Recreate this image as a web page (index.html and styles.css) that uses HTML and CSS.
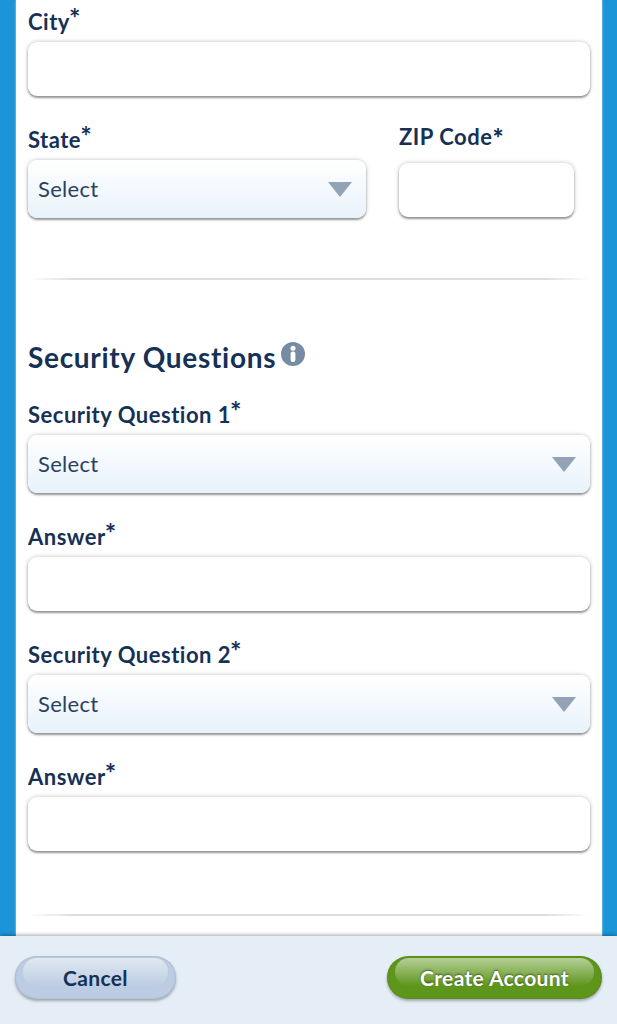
FILE: index.html
```html
<!doctype html>
<html lang="en">
<head>
    <meta charset="UTF-8">
    <title>Create Account</title>
    <meta name="viewport" content="width=device-width, initial-scale=1.0"/>
    <link rel="stylesheet" href="styles.css">
</head>
<body>
    <form class="page">
        <div class="panel">
            <div class="field">
                <label for="city">City<sup>*</sup></label>
                <input type="text" id="city">
            </div>
            <div class="row">
                <div class="field state">
                    <label>State<sup>*</sup></label>
                    <div class="select"><span>Select</span><i class="arrow"></i></div>
                </div>
                <div class="field zip">
                    <label for="zip">ZIP Code<b class="star">*</b></label>
                    <input type="text" id="zip">
                </div>
            </div>

            <hr>

            <h2>Security Questions
                <svg class="info" width="24" height="24" viewBox="0 0 24 24">
                    <circle cx="12" cy="12" r="12" fill="#768ba4"/>
                    <circle cx="12" cy="6.2" r="2.5" fill="#fff"/>
                    <rect x="9.6" y="9.6" width="4.8" height="10.4" rx="2" fill="#fff"/>
                </svg>
            </h2>
            <div class="field question">
                <label>Security Question 1<sup>*</sup></label>
                <div class="select"><span>Select</span><i class="arrow"></i></div>
            </div>
            <div class="field answer">
                <label for="answer1">Answer<sup>*</sup></label>
                <input type="text" id="answer1">
            </div>
            <div class="field question">
                <label>Security Question 2<sup>*</sup></label>
                <div class="select"><span>Select</span><i class="arrow"></i></div>
            </div>
            <div class="field answer">
                <label for="answer2">Answer<sup>*</sup></label>
                <input type="text" id="answer2">
            </div>

            <hr>
        </div>
        <div class="footer">
            <button type="button" class="btn cancel"><span>Cancel</span></button>
            <button type="button" class="btn create"><span>Create Account</span></button>
        </div>
    </form>
</body>
</html>
```

FILE: styles.css
```css
* { margin: 0; padding: 0; box-sizing: border-box; }
body { background: #1c95d8; color: #163156; font-family: Lato, "Liberation Sans", sans-serif; font-size: 22px; overflow: hidden; }
.page { height: 1024px; display: flex; flex-direction: column; }
.panel { width: 586px; height: 936px; margin-left: 16px; padding: 6px 12px 0; background: #fff; box-shadow: 0 0 2px rgba(255,255,255,0.7); overflow: hidden; }

.field label { display: block; height: 36px; line-height: 32px; font-weight: bold; letter-spacing: 0.5px; white-space: nowrap; }
sup { font-size: 27px; line-height: 0; vertical-align: 2px; letter-spacing: 0; margin-left: -1px; }
.star { font-size: 26px; line-height: 0; vertical-align: -3px; letter-spacing: 0; }
input, .select { display: block; width: 562px; border: 0; border-radius: 9px; background: #fff; box-shadow: 0 2px 2px rgba(0,0,0,0.34), 0 0 4px rgba(0,0,0,0.25); }
input { height: 54px; padding: 0 10px; font: inherit; color: inherit; }
.select { height: 58px; padding: 0 14px 0 10px; background: linear-gradient(#fff, #e8f2fb); color: #2b4164; display: flex; align-items: center; justify-content: space-between; letter-spacing: 0.3px; }
.select span { padding-bottom: 2px; }
.arrow { border: 12px solid transparent; border-top: 15px solid #92a2b7; border-bottom: 0; }

.row { display: flex; gap: 33px; margin-top: 27px; }
.state .select { width: 338px; }
.state label { height: 37px; line-height: 33px; }
.zip { margin-top: -2px; }
.zip label { height: 42px; }
.zip input { width: 175px; }

hr { height: 2px; border: 0; margin-top: 60px; background: linear-gradient(to right, transparent, #dedede 8%, #dedede 92%, transparent); }
h2 { display: flex; gap: 5px; margin-top: 60px; height: 36px; line-height: 34px; font-size: 28px; letter-spacing: 0.7px; white-space: nowrap; }
.info { margin-top: 2px; }

.question { margin-top: 28px; }
.answer { margin-top: 28px; }
h2 + .question { margin-top: 23px; }
.answer + hr { margin-top: 63px; }

.footer { height: 88px; padding: 20px 15px 0; background: #e5edf7; box-shadow: 0 -1px 4px rgba(0,0,0,0.35); position: relative; display: flex; justify-content: space-between; align-items: flex-start; }
.btn { position: relative; height: 43px; border: 0; border-radius: 22px; font: bold 21px Lato, "Liberation Sans", sans-serif; letter-spacing: 0.35px; box-shadow: 0 2px 3px rgba(0,0,0,0.3), inset 0 0 2px rgba(0,0,0,0.2); }
.btn span { position: relative; }
/* glossy highlight */
.btn:before { content: ""; position: absolute; left: 8px; right: 8px; top: 2px; height: 28px; border-radius: 18px; background: linear-gradient(rgba(255,255,255,0.55), rgba(255,255,255,0)); }
.cancel { width: 161px; background: #bccde3; color: #163156; }
.create { width: 215px; background: #5d961b; color: #fff; text-shadow: 0 -1px 2px rgba(0,0,0,0.5); }
```
